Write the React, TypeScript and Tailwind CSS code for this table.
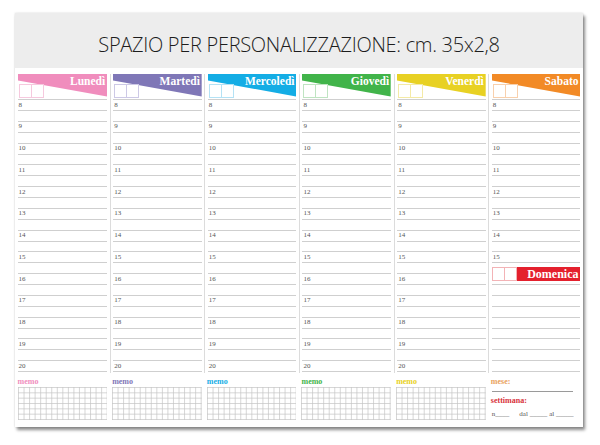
import type { ReactNode } from 'react';

type Day = { name: string; color: string; light: string };

const days: Day[] = [
  { name: 'Lunedì', color: '#f08dbd', light: '#f6c9de' },
  { name: 'Martedì', color: '#7f77b7', light: '#cdc9e6' },
  { name: 'Mercoledì', color: '#14ade5', light: '#b4e2f5' },
  { name: 'Giovedì', color: '#41b44a', light: '#bfe4c2' },
  { name: 'Venerdì', color: '#e8d123', light: '#f4eaa6' },
  { name: 'Sabato', color: '#f28a26', light: '#f8d0ad' },
];

const hours = [8, 9, 10, 11, 12, 13, 14, 15, 16, 17, 18, 19, 20];

function Cells({ border }: { border: string }) {
  return (
    <div className="flex h-[14px] w-[25px] bg-white">
      <div className="flex-1 border" style={{ borderColor: border }} />
      <div className="flex-1 border border-l-0" style={{ borderColor: border }} />
    </div>
  );
}

function Banner({ day }: { day: Day }) {
  return (
    <div className="relative h-[25px]">
      <svg className="absolute inset-0" width="100%" height="23" viewBox="0 0 90 23" preserveAspectRatio="none">
        <polygon points="0,0 90,0 90,22.5 0,6.5" fill={day.color} />
      </svg>
      <div className="relative flex h-full flex-col">
        <div className="flex justify-end pr-[2px] pt-[1px]">
          <span className="font-['Liberation_Serif',serif] text-[11.5px] leading-[13px] font-bold text-white">{day.name}</span>
        </div>
        <div className="mt-[-4px] pl-[1px]">
          <Cells border={day.light} />
        </div>
      </div>
    </div>
  );
}

function HourRow({ h }: { h: number }) {
  return (
    <div className="flex h-[11px] items-center border-b border-[#cfcfcf] pl-[1px]">
      <span className="font-['Liberation_Serif',serif] text-[7px] leading-none text-[#555]">{h}</span>
    </div>
  );
}

function Blank({ tall }: { tall?: boolean }) {
  return <div className={`border-b border-[#cfcfcf] ${tall ? 'h-[10.875px]' : 'h-[10.75px]'}`} />;
}

function MemoGrid() {
  const cols = 16;
  const rows = 6;
  const w = 90;
  const h = 33;
  const lines: ReactNode[] = [];
  for (let i = 0; i <= cols; i++) {
    const x = 0.5 + (i * (w - 1)) / cols;
    lines.push(<line key={`c${i}`} x1={x} y1={0} x2={x} y2={h} stroke="#c4c4c4" strokeWidth="0.7" />);
  }
  for (let j = 0; j <= rows; j++) {
    const y = 0.5 + (j * (h - 1)) / rows;
    lines.push(<line key={`r${j}`} x1={0} y1={y} x2={w} y2={y} stroke="#c4c4c4" strokeWidth="0.7" />);
  }
  return (
    <svg width="100%" height={h} viewBox={`0 0 ${w} ${h}`} preserveAspectRatio="none">
      {lines}
    </svg>
  );
}

function DayColumn({ day, first }: { day: Day; first: boolean }) {
  return (
    <div className="flex flex-col">
      <div className={`px-[2.5px] pb-[1px] ${first ? '' : 'border-l border-[#dcdcdc]'}`}>
        <Banner day={day} />
        <div className="border-t border-[#cfcfcf]">
          {hours.map((h, i) => (
            <div key={h}>
              <HourRow h={h} />
              {i < hours.length - 1 && <Blank />}
            </div>
          ))}
        </div>
      </div>
      <div className="px-[2.5px] pt-[3px]">
        <div className="h-[11px] font-['Liberation_Serif',serif] text-[8px] leading-[11px] font-bold" style={{ color: day.color }}>
          memo
        </div>
        <MemoGrid />
      </div>
    </div>
  );
}

function SaturdayColumn({ day }: { day: Day }) {
  const satHours = hours.slice(0, 8);
  return (
    <div className="flex flex-col">
      <div className="border-l border-[#dcdcdc] px-[2.5px] pb-[1px]">
        <Banner day={day} />
        <div className="border-t border-[#cfcfcf]">
          {satHours.map((h, i) => (
            <div key={h}>
              <HourRow h={h} />
              {i < satHours.length - 1 && <Blank />}
            </div>
          ))}
          <div className="flex h-[21.75px] items-center border-b border-[#cfcfcf]">
            <div className="flex h-[14px] w-full">
              <Cells border="#f3b3b6" />
              <div className="flex flex-1 items-center justify-end bg-[#e4202d] pr-[2px]">
                <span className="font-['Liberation_Serif',serif] text-[12px] leading-none font-bold text-white">Domenica</span>
              </div>
            </div>
          </div>
          {Array.from({ length: 8 }).map((_, i) => (
            <Blank key={i} tall />
          ))}
        </div>
      </div>
      <div className="px-[2.5px] pt-[3px] font-['Liberation_Serif',serif]">
        <div className="h-[11px] text-[8px] leading-[11px] font-bold text-[#e9a15c]">mese:</div>
        <div className="mr-[7px] ml-[1px] mt-[4px] border-b border-[#9a9a9a]" />
        <div className="mt-[3px] h-[11px] text-[8px] leading-[11px] font-bold text-[#d8313a]">settimana:</div>
        <div className="mt-[4px] flex pl-[1px] text-[7px] leading-[9px] text-[#555]">
          <span>n____</span>
          <span className="ml-[10px]">dal _____</span>
          <span className="ml-[2px]">al _____</span>
        </div>
      </div>
    </div>
  );
}

export default function App() {
  return (
    <div className="h-[445px] w-[600px] overflow-hidden bg-white pt-[13px] pl-[15px]">
      <div className="h-[414px] w-[568px] bg-white shadow-[2px_3px_3px_rgba(0,0,0,0.45),0_0_2px_rgba(0,0,0,0.15)]">
        <div className="flex h-[55px] items-center justify-center bg-[#ededed] pt-[8px]">
          <h1 className="font-['Open_Sans',sans-serif] text-[20px] font-light tracking-[-0.3px] text-[#1d1d1d]">
            SPAZIO PER PERSONALIZZAZIONE: cm. 35x2,8
          </h1>
        </div>
        <div className="mt-[6px] grid grid-cols-6">
          {days.slice(0, 5).map((d, i) => (
            <DayColumn key={d.name} day={d} first={i === 0} />
          ))}
          <SaturdayColumn day={days[5]} />
        </div>
      </div>
    </div>
  );
}
